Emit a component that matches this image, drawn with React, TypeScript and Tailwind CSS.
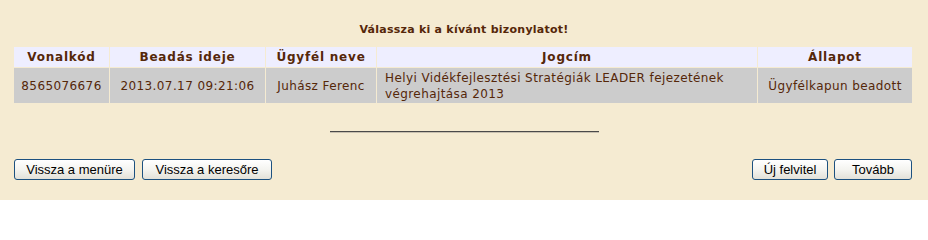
const rows = [
  {
    vonalkod: '8565076676',
    ido: '2013.07.17 09:21:06',
    ugyfel: 'Juhász Ferenc',
    jogcim: 'Helyi Vidékfejlesztési Stratégiák LEADER fejezetének végrehajtása 2013',
    allapot: 'Ügyfélkapun beadott',
  },
];

const XpButton = ({ label, className = '' }: { label: string; className?: string }) => (
  <button
    className={`h-[21px] rounded-[3px] border border-[#1c5180] bg-gradient-to-b from-white via-[#f4f4f0] to-[#e3e1d8] text-[13px] leading-none text-black font-['Liberation_Sans',Arial,sans-serif] ${className}`}
  >
    {label}
  </button>
);

export default function App() {
  return (
    <div className="w-[928px] h-[200px] bg-[#f5ebd2] text-[#552709] font-['DejaVu_Sans',Verdana,sans-serif] overflow-hidden">
      <h1 className="pt-[23px] text-center text-[11px] leading-[14px] font-bold tracking-[0.25px]">Válassza ki a kívánt bizonylatot!</h1>

      <table className="mt-[9px] ml-[13px] border-separate border-spacing-[1px] text-[12px] tracking-[0.4px] table-fixed w-[900px]">
        <thead>
          <tr className="bg-[#eeeeff] h-[20px] tracking-[0.8px]">
            <th className="w-[95px] font-bold">Vonalkód</th>
            <th className="w-[155px] font-bold">Beadás ideje</th>
            <th className="w-[110px] font-bold">Ügyfél neve</th>
            <th className="w-[380px] font-bold">Jogcím</th>
            <th className="font-bold">Állapot</th>
          </tr>
        </thead>
        <tbody>
          {rows.map(r => (
            <tr key={r.vonalkod} className="bg-[#cccccc] h-[35px]">
              <td className="text-center">{r.vonalkod}</td>
              <td className="text-center">{r.ido}</td>
              <td className="text-center">{r.ugyfel}</td>
              <td className="pl-2 pr-1 leading-[16px]">{r.jogcim}</td>
              <td className="text-center">{r.allapot}</td>
            </tr>
          ))}
        </tbody>
      </table>

      <div className="mt-[27px] flex justify-center">
        <div className="w-[269px] h-[2px] border-t border-[#4a4a4a] border-b border-b-[#c8c0b0]" />
      </div>

      <div className="mt-[26px] flex justify-between px-[14px]">
        <div className="flex gap-[7px]">
          <XpButton label="Vissza a menüre" className="w-[121px]" />
          <XpButton label="Vissza a keresőre" className="w-[130px]" />
        </div>
        <div className="flex gap-[6px] pr-[2px]">
          <XpButton label="Új felvitel" className="w-[76px]" />
          <XpButton label="Tovább" className="w-[78px]" />
        </div>
      </div>
    </div>
  );
}
